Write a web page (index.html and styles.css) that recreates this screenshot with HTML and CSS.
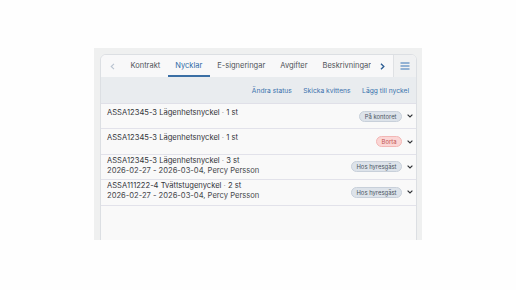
FILE: index.html
```html
<!DOCTYPE html>
<html lang="sv">
<head>
<meta charset="utf-8">
<title>Nycklar</title>
<link rel="stylesheet" href="styles.css">
</head>
<body>
<div class="stage">
  <div class="panel">
    <div class="card">
      <div class="tabbar">
        <button class="tab-arrow tab-arrow--left" type="button">
          <svg width="5" height="7" viewBox="0 0 5 7"><path d="M4 0.8 L1.2 3.5 L4 6.2" fill="none" stroke="currentColor" stroke-width="1.1"/></svg>
        </button>
        <div class="tabs">
          <span class="tab">Kontrakt</span>
          <span class="tab tab--active">Nycklar</span>
          <span class="tab">E-signeringar</span>
          <span class="tab">Avgifter</span>
          <span class="tab">Beskrivningar</span>
        </div>
        <button class="tab-arrow tab-arrow--right" type="button">
          <svg width="5" height="7" viewBox="0 0 5 7"><path d="M1 0.8 L3.8 3.5 L1 6.2" fill="none" stroke="currentColor" stroke-width="1.4"/></svg>
        </button>
        <button class="menu-btn" type="button">
          <svg width="10" height="8" viewBox="0 0 10 8"><path d="M0.5 1 H9.5 M0.5 4 H9.5 M0.5 7 H9.5" stroke="currentColor" stroke-width="1.2"/></svg>
        </button>
      </div>
      <div class="actions">
        <a class="action">Ändra status</a>
        <a class="action">Skicka kvittens</a>
        <a class="action">Lägg till nyckel</a>
      </div>
      <div class="rows">
        <div class="row">
          <div class="row-main row-main--one">
            <div class="title">ASSA12345-3 Lägenhetsnyckel <span class="dot">·</span> 1 st</div>
          </div>
          <div class="row-side">
            <span class="badge">På kontoret</span>
            <svg class="chev" width="6" height="4" viewBox="0 0 6 4"><path d="M0.6 0.6 L3 3 L5.4 0.6" fill="none" stroke="currentColor" stroke-width="1.2"/></svg>
          </div>
        </div>
        <div class="row">
          <div class="row-main row-main--one">
            <div class="title">ASSA12345-3 Lägenhetsnyckel <span class="dot">·</span> 1 st</div>
          </div>
          <div class="row-side">
            <span class="badge badge--red">Borta</span>
            <svg class="chev" width="6" height="4" viewBox="0 0 6 4"><path d="M0.6 0.6 L3 3 L5.4 0.6" fill="none" stroke="currentColor" stroke-width="1.2"/></svg>
          </div>
        </div>
        <div class="row">
          <div class="row-main row-main--two">
            <div class="title">ASSA12345-3 Lägenhetsnyckel <span class="dot">·</span> 3 st</div>
            <div class="sub">2026-02-27 - 2026-03-04, Percy Persson</div>
          </div>
          <div class="row-side">
            <span class="badge">Hos hyresgäst</span>
            <svg class="chev" width="6" height="4" viewBox="0 0 6 4"><path d="M0.6 0.6 L3 3 L5.4 0.6" fill="none" stroke="currentColor" stroke-width="1.2"/></svg>
          </div>
        </div>
        <div class="row">
          <div class="row-main row-main--two">
            <div class="title">ASSA111222-4 Tvättstugenyckel <span class="dot">·</span> 2 st</div>
            <div class="sub">2026-02-27 - 2026-03-04, Percy Persson</div>
          </div>
          <div class="row-side">
            <span class="badge">Hos hyresgäst</span>
            <svg class="chev" width="6" height="4" viewBox="0 0 6 4"><path d="M0.6 0.6 L3 3 L5.4 0.6" fill="none" stroke="currentColor" stroke-width="1.2"/></svg>
          </div>
        </div>
      </div>
    </div>
  </div>
</div>
</body>
</html>
```

FILE: styles.css
```css
* { box-sizing: border-box; }

html, body {
  margin: 0;
  padding: 0;
  background: #fefefe;
  font-family: Inter, "Noto Sans", "Liberation Sans", sans-serif;
}

.stage {
  padding: 48px 0 0 94px;
}

.panel {
  width: 328px;
  height: 192px;
  background: #eff0f0;
  overflow: hidden;
  padding: 6px 0 0 6px;
}

.card {
  width: 317px;
  min-height: 220px;
  background: #f9f9f9;
  border: 1px solid #dcdfe3;
  border-radius: 6px 6px 0 0;
  overflow: hidden;
}

.tabbar {
  display: flex;
  height: 22px;
  background: #f8f8f9;
}

.tab-arrow {
  border: 0;
  background: transparent;
  padding: 0;
  display: flex;
  align-items: center;
  justify-content: center;
  flex: none;
}

.tab-arrow--left {
  width: 22px;
  color: #b9c3d0;
}

.tab-arrow--right {
  width: 22px;
  color: #2f5f95;
}

.tabs {
  flex: 1;
  display: flex;
  overflow: hidden;
}

.tab {
  flex: none;
  padding: 0 7.5px;
  font-size: 7.5px;
  font-weight: 400;
  color: #4f5358;
  line-height: 22px;
  border-bottom: 2px solid transparent;
  white-space: nowrap;
}

.tab--active {
  color: #2d6aa6;
  border-bottom-color: #3b6fa5;
}

.menu-btn {
  width: 23px;
  flex: none;
  border: 0;
  border-left: 1px solid #dfe1e4;
  background: #f0f1f2;
  color: #3674b5;
  display: flex;
  align-items: center;
  justify-content: center;
  padding: 0;
}

.actions {
  height: 27px;
  background: #e9ecef;
  border-bottom: 1px solid #e0e0e8;
  display: flex;
  justify-content: flex-end;
  align-items: center;
  gap: 11.5px;
  padding: 2px 7px 0 0;
}

.action {
  font-size: 6.7px;
  color: #3a72ad;
  white-space: nowrap;
}

.row {
  height: 25.4px;
  display: flex;
  justify-content: space-between;
  border-bottom: 1px solid #e2e2ea;
  background: #f9f9f9;
  padding: 0 3px 0 6px;
}

.row-main--one { padding-top: 4px; }
.row-main--two { padding-top: 1px; }

.title, .sub {
  font-size: 7.6px;
  line-height: 10px;
  color: #3a3c40;
  white-space: nowrap;
}

.title { font-weight: 400; color: #33353a; }

.sub { color: #46484c; }

.dot { color: #9a9ca0; }

.row-side {
  display: flex;
  align-items: center;
  gap: 5px;
}

.badge {
  height: 11px;
  line-height: 10px;
  padding: 0 4.5px;
  border-radius: 6px;
  font-size: 5.9px;
  font-weight: 400;
  color: #4b5562;
  background: #dde3ea;
  border: 0.5px solid #c8d0da;
  white-space: nowrap;
}

.badge--red {
  color: #c25552;
  background: #fbd6d5;
  border-color: #f2b7b5;
}

.chev {
  color: #33363a;
  display: block;
}
```
